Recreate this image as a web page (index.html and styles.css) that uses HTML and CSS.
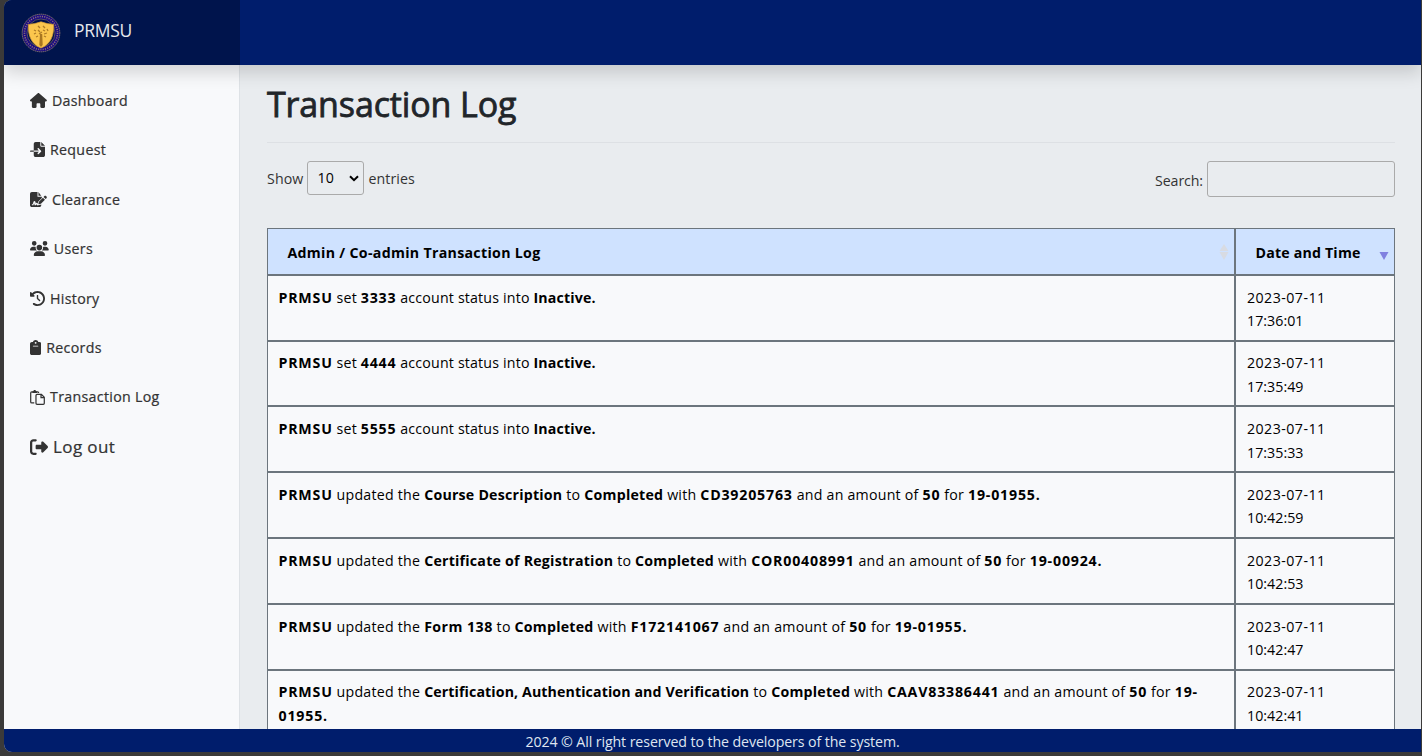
FILE: index.html
```html
<!DOCTYPE html>
<html lang="en">
<head>
<meta charset="utf-8">
<title>PRMSU - Transaction Log</title>
<link rel="stylesheet" href="styles.css">
</head>
<body>
<div class="window">
  <header class="topbar">
    <div class="brand">
      <svg class="seal" viewBox="0 0 40 40">
        <circle cx="20" cy="20" r="16.4" fill="none" stroke="#1c0d80" stroke-width="4.4"/>
        <circle cx="20" cy="20" r="18.8" fill="none" stroke="#a48a78" stroke-width=".8" stroke-dasharray="1.5 .5"/>
        <circle cx="20" cy="20" r="16.5" fill="none" stroke="#8d7079" stroke-width="1.6" stroke-dasharray="1.1 1.2"/>
        <circle cx="20" cy="20" r="14" fill="#00104a" stroke="#8e7778" stroke-width=".6"/>
        <path d="M7.300 11.500Q14 11 20 8.800Q26 11 32.700 11.500C33 23 29.500 31.500 20 35C10.500 31.500 7 23 7.300 11.500Z" fill="#fbc64d" stroke="#d69c35" stroke-width=".7"/>
        <path d="M19 21h2.200l.5 11-1.700 2-1.700-2z" fill="#a87620"/>
        <path d="M17 13l2 2m3-2l2 2M13 17l2 1m2-1l2 2m3-2l2 1m2-2l1 2M13 21l2-1m3 1l3-2m2 2l3-1M15 24l2-1m6 0l2 1" stroke="#ad7c27" stroke-width="1.300"/>
      </svg>
      <span class="brand-name">PRMSU</span>
    </div>
  </header>
  <div class="body">
    <nav class="sidebar">
      <a class="item dashboard"><svg class="icon" viewBox="0 0 576 512"><path d="M575.800 255.500c0 18-15 32.100-32 32.100h-32l.7 160.200V472c0 22.100-17.900 40-40 40H392c-22.100 0-40-17.900-40-40V384c0-17.700-14.300-32-32-32H256c-17.700 0-32 14.300-32 32v88c0 22.100-17.900 40-40 40H104c-22.100 0-40-17.900-40-40V287.600H32c-18 0-32-14-32-32.100 0-9 3-17 10-24L266.400 8c7-7 15-8 22-8s15 2 21 7L564.800 231.500c8 7 12 15 11 24z"/></svg><span>Dashboard</span></a>
      <a class="item request"><svg class="icon" viewBox="0 0 512 512"><path d="M128 64c0-35.300 28.700-64 64-64H352V128c0 17.700 14.300 32 32 32H512V448c0 35.300-28.700 64-64 64H192c-35.300 0-64-28.700-64-64V336H302.100l-39 39c-9.400 9.400-9.400 24.600 0 33.900s24.600 9.400 33.900 0l80-80c9.400-9.400 9.400-24.600 0-33.900l-80-80c-9.400-9.400-24.600-9.400-33.900 0s-9.400 24.600 0 33.900l39 39H128V64zm0 224v48H24c-13.300 0-24-10.700-24-24s10.700-24 24-24H128zM512 128H384V0z"/></svg><span>Request</span></a>
      <a class="item clearance"><svg class="icon" viewBox="0 0 576 512"><path d="M64 0C29 0 0 29 0 64v384c0 35 29 64 64 64h256c35 0 64-29 64-64v-19l-104 27c-25 6-39-3-48-20l-7-14-24 23c-5 5-12 7-21 7h-20l-21-70-25 70H64v-32h27l30-90c11-29 53-28 62 1l17 59 14-13c13-11 31-8 39 6l10 19 20-77 121-121v-44H256V0zM288 0v128h96zM549 139c-16-16-41-16-57 0l-30 30 71 71 30-30c16-16 16-41 0-57zM440 192L311 321c-4 4-7 9-8 15l-15 60c-3 12 8 23 19 20l60-15c6-1 11-4 15-8l129-129z"/></svg><span>Clearance</span></a>
      <a class="item users"><svg class="icon" viewBox="0 0 640 512"><path d="M144 0a80 80 0 1 1 0 160 80 80 0 0 1 0-160zM512 0a80 80 0 1 1 0 160 80 80 0 0 1 0-160zM0 299c0-59 48-107 107-107h43c16 0 31 4 45 10-9 48 8 92 40 118H21c-12 0-21-9-21-21zM405 320c32-26 50-70 40-118 14-6 29-10 45-10h43c59 0 107 48 107 107 0 12-9 21-21 21zM320 128a96 96 0 1 1 0 192 96 96 0 0 1 0-192zM128 485c0-74 60-133 133-133h118c73 0 133 59 133 133 0 15-12 27-27 27H155c-15 0-27-12-27-27z"/></svg><span>Users</span></a>
      <a class="item history"><svg class="icon" viewBox="0 0 512 512"><path d="M75 75L41 41C25.900 25.900 0 36.600 0 57.900V168c0 13.300 10.700 24 24 24H134.100c21.400 0 32.100-25.900 17-41l-30.800-30.800C155 85.500 203 64 256 64c106 0 192 86 192 192s-86 192-192 192c-40.800 0-78.600-12.700-109.700-34.400-14.500-10.100-34.400-6.600-44.600 7.900s-6.600 34.400 7.900 44.600C151.200 495 201.700 512 256 512c141.400 0 256-114.600 256-256S397.400 0 256 0C185.300 0 121.300 28.700 75 75zm181 53c-13.300 0-24 10.700-24 24V256c0 6.400 2.500 12.500 7 17l72 72c9.400 9.400 24.600 9.400 33.900 0s9.400-24.600 0-33.900l-65-65V152c0-13.300-10.700-24-24-24z"/></svg><span>History</span></a>
      <a class="item records"><svg class="icon" viewBox="0 0 384 512"><path fill-rule="evenodd" d="M192 0c-42 0-77 27-90 64H64c-35 0-64 29-64 64v320c0 35 29 64 64 64h256c35 0 64-29 64-64V128c0-35-29-64-64-64h-38C269 27 234 0 192 0zm0 64a32 32 0 1 1 0 64 32 32 0 0 1 0-64zM112 192h160c22 0 22 32 0 32H112c-22 0-22-32 0-32z"/></svg><span>Records</span></a>
      <a class="item log"><svg class="icon" viewBox="0 0 512 512"><path d="M145 442H60c-20 0-36-16-36-36V100c0-20 16-36 36-36h200c20 0 36 16 36 36v5M240 150h150l98 98v204c0 20-16 36-36 36H240c-20 0-36-16-36-36V186c0-20 16-36 36-36zM376 160v100h112" fill="none" stroke="currentColor" stroke-width="42"/><path d="M80 48h32c10-64 86-64 96 0h32v54H80z"/></svg><span>Transaction Log</span></a>
      <a class="item logout"><svg class="icon" viewBox="0 0 512 512"><path d="M377.900 105.900L500.700 228.700c15 15 15 39.600 0 54.600L377.900 406.100c-6.400 6.400-15 9.900-24 9.900-18.700 0-33.900-15.200-33.900-33.900V320H192c-17.700 0-32-14.300-32-32v-64c0-17.700 14.300-32 32-32h128v-62.100c0-18.700 15.200-33.900 33.900-33.900 9 0 17.600 3.600 24 9.900zM160 96H96c-17.700 0-32 14.300-32 32v256c0 17.700 14.300 32 32 32h64c17.700 0 32 14.300 32 32s-14.300 32-32 32H96c-53 0-96-43-96-96V128C0 75 43 32 96 32h64c17.700 0 32 14.300 32 32s-14.300 32-32 32z"/></svg><span>Log out</span></a>
    </nav>
    <main class="content">
      <h1 class="title">Transaction Log</h1>
      <div class="controls">
        <label class="length"><span>Show</span><span class="select">10<svg class="chevron" viewBox="0 0 10 7"><path d="M1 1.200l4 4 4-4" fill="none" stroke="#000" stroke-width="2"/></svg></span><span>entries</span></label>
        <label class="search"><span class="search-label">Search:</span><input class="search-box" type="text"></label>
      </div>
      <table class="table">
        <thead><tr>
          <th class="main-col"><div class="head"><span class="wide">Admin / Co-admin Transaction Log</span><svg class="sort" viewBox="0 0 10 16"><path d="M5 0l4.500 7h-9zM5 16l4.500-8h-9z" fill="#d8dbe2"/></svg></div></th>
          <th><div class="head"><span>Date and Time</span><svg class="sort" viewBox="0 0 10 16"><path d="M5 16l4.500-8h-9z" fill="#8080e0"/></svg></div></th>
        </tr></thead>
        <tbody>
          <tr><td><b class="code">PRMSU</b> set <b class="code">3333</b> account status into <b>Inactive.</b></td><td><span class="date">2023-07-11</span><br><span class="time">17:36:01</span></td></tr>
          <tr><td><b class="code">PRMSU</b> set <b class="code">4444</b> account status into <b>Inactive.</b></td><td><span class="date">2023-07-11</span><br><span class="time">17:35:49</span></td></tr>
          <tr><td><b class="code">PRMSU</b> set <b class="code">5555</b> account status into <b>Inactive.</b></td><td><span class="date">2023-07-11</span><br><span class="time">17:35:33</span></td></tr>
          <tr class="updated"><td><b class="code">PRMSU</b> updated the <b>Course Description</b> to <b>Completed</b> with <b class="code">CD39205763</b> and an amount of <b class="code">50</b> for <b class="code">19-01955.</b></td><td><span class="date">2023-07-11</span><br><span class="time">10:42:59</span></td></tr>
          <tr class="updated"><td><b class="code">PRMSU</b> updated the <b>Certificate of Registration</b> to <b>Completed</b> with <b class="code">COR00408991</b> and an amount of <b class="code">50</b> for <b class="code">19-00924.</b></td><td><span class="date">2023-07-11</span><br><span class="time">10:42:53</span></td></tr>
          <tr class="updated"><td><b class="code">PRMSU</b> updated the <b class="wide">Form 138</b> to <b>Completed</b> with <b class="code">F172141067</b> and an amount of <b class="code">50</b> for <b class="code">19-01955.</b></td><td><span class="date">2023-07-11</span><br><span class="time">10:42:47</span></td></tr>
          <tr class="updated"><td><b class="code">PRMSU</b> updated the <b class="narrow">Certification, Authentication and Verification</b> to <b>Completed</b> with <b class="code">CAAV83386441</b> and an amount of <b class="code">50</b> for <b class="code">19-<br>01955.</b></td><td><span class="date">2023-07-11</span><br><span class="time">10:42:41</span></td></tr>
        </tbody>
      </table>
    </main>
  </div>
  <footer class="footer">2024 © All right reserved to the developers of the system.</footer>
</div>
</body>
</html>
```
FILE: styles.css
```css
* { box-sizing: border-box; }
body {
  margin: 0;
  height: 756px;
  padding: 0 1px 4px 4px;
  overflow: hidden;
  background: #3b3a39;
  font-family: "Open Sans", "Noto Sans", sans-serif;
  font-size: 14.2px;
  line-height: 23.4px;
  color: #333;
}
.window {
  height: 752px;
  display: flex;
  flex-direction: column;
  overflow: hidden;
  border-radius: 8px 0 0 8px;
  background: #e9ecef;
}
.topbar {
  flex: none;
  height: 65px;
  background: #001d6c;
  box-shadow: 0 8px 16px rgba(0, 0, 0, .15);
  z-index: 1;
}
.brand {
  width: 236px;
  height: 65px;
  padding-left: 17px;
  display: flex;
  align-items: center;
  gap: 13px;
  background: #00144c;
}
.seal { width: 40px; height: 40px; }
.brand-name { color: #e5e8ed; font-size: 17.5px; letter-spacing: -.3px; padding-bottom: 3px; }
.body { flex: 1; min-height: 0; display: flex; overflow: hidden; }
.sidebar {
  flex: none;
  width: 236px;
  padding: 10.8px 0 0 26px;
  display: flex;
  flex-direction: column;
  background: #f8f9fb;
  border-right: 1px solid #dee2e6;
}
.item {
  height: 49.45px;
  display: flex;
  align-items: center;
  gap: 5px;
  letter-spacing: .32px;
  -webkit-text-stroke: .22px currentColor;
  white-space: nowrap;
}
.icon { height: 15px; width: auto; fill: currentColor; -webkit-text-stroke: 0; }
.logout { font-size: 17px; letter-spacing: .4px; }
.logout .icon { height: 18px; }
.content { flex: 1; min-width: 0; padding: 0 26px 0 27px; }
.title {
  margin: 0;
  height: 78px;
  padding-top: 18px;
  line-height: 42px;
  border-bottom: 1px solid #dde0e4;
  font-size: 34px;
  font-weight: 400;
  letter-spacing: -.13px;
  -webkit-text-stroke: .8px currentColor;
  color: #212529;
}
.controls {
  height: 85px;
  padding-top: 18px;
  display: flex;
  justify-content: space-between;
  align-items: flex-start;
}
.length, .search { display: flex; align-items: center; gap: 4px; }
.length { letter-spacing: .1px; }
.length > span:not(.select) { padding-top: 1px; }
.search-label { padding-top: 3px; letter-spacing: -.1px; }
.select {
  width: 57px;
  height: 34px;
  padding: 0 4px 0 9px;
  display: flex;
  align-items: center;
  justify-content: space-between;
  border: 1px solid #aaa;
  border-radius: 3px;
  color: #000;
}
.chevron { width: 10px; height: 7px; }
.search-box {
  width: 188px;
  height: 36px;
  border: 1px solid #aaa;
  border-radius: 3px;
  background: transparent;
}
.table {
  width: 1128px;
  table-layout: fixed;
  border-collapse: separate;
  border-spacing: 0;
  color: #000;
  letter-spacing: .18px;
}
.table th, .table td { border: 1px solid #6c757d; }
.table th {
  width: 160px;
  height: 46.8px;
  padding: 2px 5.5px 0 19.5px;
  background: #cfe2ff;
  text-align: left;
  font-weight: 700;
}
.table .main-col { width: 968px; }
.head { display: flex; justify-content: space-between; align-items: center; }
.sort { width: 10px; height: 16px; }
.table td {
  height: 65.8px;
  padding: 9.9px 10.5px 0;
  vertical-align: top;
  white-space: nowrap;
  background: #f8f9fb;
}
.table td + td { padding-left: 11px; }
.table b { letter-spacing: .14px; }
.table .updated { letter-spacing: .23px; }
.table .updated b { letter-spacing: .22px; }
.table .updated .narrow { letter-spacing: .1px; }
.table .code, .table .updated .code { letter-spacing: .8px; }
.table .wide, .table .updated .wide { letter-spacing: .3px; }
.table .updated .wide { letter-spacing: .45px; }
.table .date { letter-spacing: .45px; }
.table .time { letter-spacing: .05px; }
.footer {
  flex: none;
  height: 23px;
  line-height: 25px;
  background: #001d6c;
  color: #dfe5f0;
  text-align: center;
  letter-spacing: -.1px;
  z-index: 1;
}
```
